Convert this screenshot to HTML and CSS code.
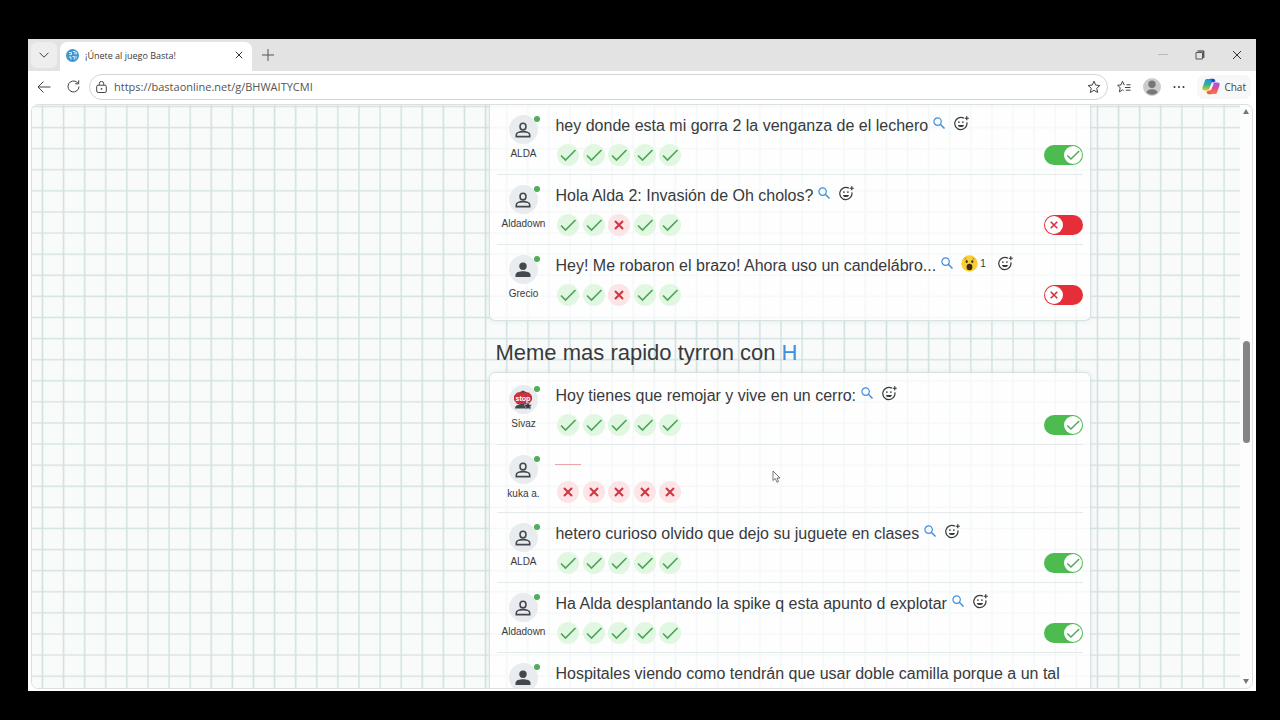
FILE: index.html
```html
<!DOCTYPE html>
<html lang="es">
<head>
<meta charset="UTF-8" />
<meta name="viewport" content="width=device-width, initial-scale=1" />
<title>¡Únete al juego Basta!</title>
<link rel="stylesheet" href="styles.css">
</head>
<body>

<!-- Iconos compartidos -->
<svg class="sprite" aria-hidden="true">
  <symbol id="i-check" viewBox="0 0 22 22"><path d="M4 11.500l4.500 4.500L18.500 6" fill="none" stroke="currentColor" stroke-width="1.700"/></symbol>
  <symbol id="i-cross" viewBox="0 0 22 22"><path d="M7 7l8 8M15 7l-8 8" fill="none" stroke="currentColor" stroke-width="2"/></symbol>
  <symbol id="i-user" viewBox="0 0 16 16"><path d="M8 1.200a2.900 2.900 0 0 1 2.900 2.900v.8a2.900 2.900 0 0 1-5.800 0v-.8A2.900 2.900 0 0 1 8 1.200zM1.300 14.600v-1.800c0-2 3.400-3.200 6.700-3.200s6.700 1.200 6.700 3.200v1.800z" fill="none" stroke="currentColor" stroke-width="1.600"/></symbol>
  <symbol id="i-user-full" viewBox="0 0 16 16"><circle cx="8" cy="4.300" r="3.700" fill="currentColor"/><path d="M.5 15v-2c0-2.800 4-3.700 7.500-3.700s7.500.9 7.500 3.700v2z" fill="currentColor"/></symbol>
  <symbol id="i-search" viewBox="0 0 12 12"><circle cx="4.600" cy="4.600" r="3.700" fill="none" stroke="currentColor" stroke-width="1.200"/><path d="M7.300 7.300l4.200 4.200" stroke="currentColor" stroke-width="1.500"/></symbol>
  <symbol id="i-smile" viewBox="0 0 16 16"><path d="M10.500 2.300A6.500 6.500 0 1 0 13.700 6.700" fill="none" stroke="currentColor" stroke-width="1.300"/><path d="M4.300 9.500h6.200a3.100 2.300 0 0 1-6.200 0z" fill="currentColor"/><circle cx="5.200" cy="6.500" r=".9" fill="currentColor"/><circle cx="9.500" cy="6.500" r=".9" fill="currentColor"/><path d="M13.600.2v4.400M11.400 2.400h4.400" stroke="currentColor" stroke-width="1.300"/></symbol>
  <symbol id="i-star" viewBox="0 0 14 14"><path d="M7 1.200l1.700 3.900 4.200.4-3.200 2.800 1 4.200L7 10.300l-3.700 2.200 1-4.200L1.100 5.500l4.200-.4z" fill="none" stroke="currentColor" stroke-linejoin="round"/></symbol>
</svg>

<div class="window">
  <header class="tabs">
    <button class="tab-menu" aria-label="Pestañas"><svg width="10" height="6" viewBox="0 0 10 6"><path d="M.5.7L5 5.200 9.500.7" fill="none" stroke="#444"/></svg></button>
    <div class="tab">
      <svg width="13" height="13" viewBox="0 0 13 13"><circle cx="6.500" cy="6.500" r="6.500" fill="#3b97d3"/><path d="M3 3.500h2.500v2H3.300M7 2.500h2v3M10.300 3v2.500M3 8h2v2.500M6.500 7.500h1.800v3M10 7v2.500" fill="none" stroke="#d9eefb"/></svg>
      <span class="tab-title">¡Únete al juego Basta!</span>
      <button class="icon-btn" aria-label="Cerrar pestaña"><svg width="8" height="8" viewBox="0 0 8 8"><path d="M.8.8l6.400 6.400M7.200.8L.8 7.200" stroke="#333"/></svg></button>
    </div>
    <button class="icon-btn new-tab" aria-label="Nueva pestaña"><svg width="12" height="12" viewBox="0 0 12 12"><path d="M6 0v12M0 6h12" stroke="#555"/></svg></button>
    <div class="window-controls">
      <button class="icon-btn" aria-label="Minimizar"><svg width="10" height="10" viewBox="0 0 10 10"><path d="M0 4.500h10" stroke="#bbb"/></svg></button>
      <button class="icon-btn" aria-label="Restaurar"><svg width="10" height="10" viewBox="0 0 10 10"><path d="M1 2.500h6.500V9H1z" fill="none" stroke="#555"/><path d="M2.500 1h6.300v7" fill="none" stroke="#222"/></svg></button>
      <button class="icon-btn" aria-label="Cerrar"><svg width="10" height="10" viewBox="0 0 10 10"><path d="M1 1l8 8M9 1L1 9" stroke="#333"/></svg></button>
    </div>
  </header>

  <nav class="toolbar">
    <div class="nav-buttons">
      <button class="icon-btn" aria-label="Atrás"><svg width="14" height="12" viewBox="0 0 14 12"><path d="M13.500 6H1M6.500.5L1 6l5.500 5.500" fill="none" stroke="#444"/></svg></button>
      <button class="icon-btn" aria-label="Actualizar"><svg width="13" height="13" viewBox="0 0 13 13"><path d="M12 6.500a5.500 5.500 0 1 1-1.800-4.100l1.300 1.300M11.700.3v3.500H8.200" fill="none" stroke="#444"/></svg></button>
    </div>
    <div class="omnibox">
      <svg width="11" height="12" viewBox="0 0 11 12"><path d="M2 4.200h7a1.300 1.300 0 0 1 1.300 1.300v4.500A1.500 1.500 0 0 1 8.800 11.500H2.200A1.500 1.500 0 0 1 .7 10V5.500A1.300 1.300 0 0 1 2 4.200zM3.300 4V2.600a2.200 2.200 0 0 1 4.400 0V4" fill="none" stroke="#444"/><circle cx="5.500" cy="7.800" r=".9" fill="#444"/></svg>
      <input type="text" class="url" aria-label="Dirección" value="https://bastaonline.net/g/BHWAITYCMI">
      <button class="icon-btn" aria-label="Favorito"><svg width="14" height="14"><use href="#i-star"/></svg></button>
    </div>
    <button class="icon-btn" aria-label="Favoritos"><svg width="14" height="14" viewBox="0 0 14 14"><path d="M7.500 4.800H7L5.500 1.300 4 4.900.7 5.300l2.500 2.600-.8 4 3.200-2 .9.5M9.500 4.800h4M8 7.500h5.500M8.800 10.200h4.700" fill="none" stroke="#444" stroke-linejoin="round"/></svg></button>
    <button class="icon-btn" aria-label="Perfil"><svg width="18" height="18" viewBox="0 0 18 18"><circle cx="9" cy="9" r="9" fill="#cbcbcb"/><circle cx="9" cy="6.300" r="3.700" fill="#777"/><path d="M3.500 14.500a5.500 3.300 0 0 1 11 0A8 8 0 0 1 3.500 14.500z" fill="#777"/></svg></button>
    <button class="icon-btn" aria-label="Más"><svg width="12" height="4" viewBox="0 0 12 4"><circle cx="1.500" cy="2" r="1" fill="#333"/><circle cx="6" cy="2" r="1" fill="#333"/><circle cx="10.500" cy="2" r="1" fill="#333"/></svg></button>
    <button class="chat-btn">
      <svg width="18" height="17" viewBox="0 0 18 17">
        <defs>
          <linearGradient id="g1" x1="0" y1="0" x2="0" y2="1"><stop offset="0" stop-color="#1f8fe8"/><stop offset=".5" stop-color="#31b394"/><stop offset="1" stop-color="#f5c518"/></linearGradient>
          <linearGradient id="g2" x1="0" y1="0" x2="0" y2="1"><stop offset="0" stop-color="#9a5be8"/><stop offset=".5" stop-color="#ea4a8c"/><stop offset="1" stop-color="#f5803c"/></linearGradient>
        </defs>
        <path d="M5 1h6L7.500 12.500H2.500C.5 12.500 0 11 .5 9.500L3 2.500C3.300 1.500 4 1 5 1z" fill="url(#g1)"/>
        <path d="M8 .8h3.500c1 0 1.500.8 2 2.700l-3 .8z" fill="#1c4fc4"/>
        <path d="M13 16H7l3.500-11.500h5c2 0 2.500 1.500 2 3L15 14.500c-.3 1-1 1.500-2 1.500z" fill="url(#g2)"/>
        <path d="M10 16.200H6.500c-1 0-1.500-.8-2-2.700l3-1z" fill="#f0643c"/>
        <path d="M9.600 5.200h2.200L9 12H6.900z" fill="#fff"/>
      </svg>
      Chat
    </button>
  </nav>

  <div class="view">
    <main class="page">
      <div class="content">

        <section class="card card-cut">
          <article class="row">
            <div class="player">
              <div class="avatar online"><svg width="16" height="16"><use href="#i-user"/></svg></div>
              <span class="name">ALDA</span>
            </div>
            <div class="answer">
              <div class="phrase">
                <span>hey donde esta mi gorra 2 la venganza de el lechero</span>
                <button class="icon-btn search" aria-label="Buscar"><svg width="12" height="12"><use href="#i-search"/></svg></button>
                <button class="icon-btn react" aria-label="Reaccionar"><svg width="15" height="15"><use href="#i-smile"/></svg></button>
              </div>
              <div class="votes">
                <svg class="yes"><use href="#i-check"/></svg><svg class="yes"><use href="#i-check"/></svg><svg class="yes"><use href="#i-check"/></svg><svg class="yes"><use href="#i-check"/></svg><svg class="yes"><use href="#i-check"/></svg>
              </div>
            </div>
            <label class="toggle"><input type="checkbox" aria-label="Validar respuesta de ALDA" checked><span class="knob"><svg class="on"><use href="#i-check"/></svg><svg class="off"><use href="#i-cross"/></svg></span></label>
          </article>

          <article class="row">
            <div class="player">
              <div class="avatar online"><svg width="16" height="16"><use href="#i-user"/></svg></div>
              <span class="name">Aldadown</span>
            </div>
            <div class="answer">
              <div class="phrase">
                <span>Hola Alda 2: Invasión de Oh cholos?</span>
                <button class="icon-btn search" aria-label="Buscar"><svg width="12" height="12"><use href="#i-search"/></svg></button>
                <button class="icon-btn react" aria-label="Reaccionar"><svg width="15" height="15"><use href="#i-smile"/></svg></button>
              </div>
              <div class="votes">
                <svg class="yes"><use href="#i-check"/></svg><svg class="yes"><use href="#i-check"/></svg><svg class="no"><use href="#i-cross"/></svg><svg class="yes"><use href="#i-check"/></svg><svg class="yes"><use href="#i-check"/></svg>
              </div>
            </div>
            <label class="toggle"><input type="checkbox" aria-label="Validar respuesta de Aldadown"><span class="knob"><svg class="on"><use href="#i-check"/></svg><svg class="off"><use href="#i-cross"/></svg></span></label>
          </article>

          <article class="row">
            <div class="player">
              <div class="avatar online"><svg width="16" height="16"><use href="#i-user-full"/></svg></div>
              <span class="name">Grecio</span>
            </div>
            <div class="answer">
              <div class="phrase">
                <span>Hey! Me robaron el brazo! Ahora uso un candelábro...</span>
                <button class="icon-btn search" aria-label="Buscar"><svg width="12" height="12"><use href="#i-search"/></svg></button>
                <button class="icon-btn emoji"><svg width="17" height="17" viewBox="0 0 17 17"><circle cx="8.500" cy="8.500" r="8.200" fill="#f8cf35"/><path d="M3.500 4.200l2-1M11.500 3.200l2 1" stroke="#b3821a"/><ellipse cx="5.700" cy="6.500" rx="1.100" ry="1.500" fill="#4a3515"/><ellipse cx="11.300" cy="6.500" rx="1.100" ry="1.500" fill="#4a3515"/><ellipse cx="8.500" cy="12" rx="2.900" ry="3.200" fill="#3d2c14"/></svg><span class="count">1</span></button>
                <button class="icon-btn react" aria-label="Reaccionar"><svg width="15" height="15"><use href="#i-smile"/></svg></button>
              </div>
              <div class="votes">
                <svg class="yes"><use href="#i-check"/></svg><svg class="yes"><use href="#i-check"/></svg><svg class="no"><use href="#i-cross"/></svg><svg class="yes"><use href="#i-check"/></svg><svg class="yes"><use href="#i-check"/></svg>
              </div>
            </div>
            <label class="toggle"><input type="checkbox" aria-label="Validar respuesta de Grecio"><span class="knob"><svg class="on"><use href="#i-check"/></svg><svg class="off"><use href="#i-cross"/></svg></span></label>
          </article>
        </section>

        <h2>Meme mas rapido tyrron con <span class="letter">H</span></h2>

        <section class="card">
          <article class="row">
            <div class="player">
              <div class="avatar online">
                <svg width="20" height="20" viewBox="0 0 20 20"><path d="M2 18.500c0-3 3-4.500 8-4.500s8 1.500 8 4.500z" fill="#44474e"/><path d="M5 3l5-2.500L15 3z" fill="#44474e"/><path d="M4 2.500h12L19 6v4l-3 4H4l-3-4V6z" fill="#d32f3a"/><text x="10" y="10.500" class="stop-text">stop</text><path d="M15 12l1.200 2.500 2.800.3-2 2 .5 2.700-2.500-1.300-2.500 1.300.5-2.700-2-2 2.800-.3z" fill="#33363d" stroke="#e9ecef" stroke-width=".5"/></svg>
              </div>
              <span class="name">Sivaz</span>
            </div>
            <div class="answer">
              <div class="phrase">
                <span>Hoy tienes que remojar y vive en un cerro:</span>
                <button class="icon-btn search" aria-label="Buscar"><svg width="12" height="12"><use href="#i-search"/></svg></button>
                <button class="icon-btn react" aria-label="Reaccionar"><svg width="15" height="15"><use href="#i-smile"/></svg></button>
              </div>
              <div class="votes">
                <svg class="yes"><use href="#i-check"/></svg><svg class="yes"><use href="#i-check"/></svg><svg class="yes"><use href="#i-check"/></svg><svg class="yes"><use href="#i-check"/></svg><svg class="yes"><use href="#i-check"/></svg>
              </div>
            </div>
            <label class="toggle"><input type="checkbox" aria-label="Validar respuesta de Sivaz" checked><span class="knob"><svg class="on"><use href="#i-check"/></svg><svg class="off"><use href="#i-cross"/></svg></span></label>
          </article>

          <article class="row row-empty">
            <div class="player">
              <div class="avatar online"><svg width="16" height="16"><use href="#i-user"/></svg></div>
              <span class="name">kuka a.</span>
            </div>
            <div class="answer">
              <div class="phrase"><span class="blank"></span></div>
              <div class="votes">
                <svg class="no"><use href="#i-cross"/></svg><svg class="no"><use href="#i-cross"/></svg><svg class="no"><use href="#i-cross"/></svg><svg class="no"><use href="#i-cross"/></svg><svg class="no"><use href="#i-cross"/></svg>
              </div>
            </div>
          </article>

          <article class="row">
            <div class="player">
              <div class="avatar online"><svg width="16" height="16"><use href="#i-user"/></svg></div>
              <span class="name">ALDA</span>
            </div>
            <div class="answer">
              <div class="phrase">
                <span>hetero curioso olvido que dejo su juguete en clases</span>
                <button class="icon-btn search" aria-label="Buscar"><svg width="12" height="12"><use href="#i-search"/></svg></button>
                <button class="icon-btn react" aria-label="Reaccionar"><svg width="15" height="15"><use href="#i-smile"/></svg></button>
              </div>
              <div class="votes">
                <svg class="yes"><use href="#i-check"/></svg><svg class="yes"><use href="#i-check"/></svg><svg class="yes"><use href="#i-check"/></svg><svg class="yes"><use href="#i-check"/></svg><svg class="yes"><use href="#i-check"/></svg>
              </div>
            </div>
            <label class="toggle"><input type="checkbox" aria-label="Validar respuesta de ALDA" checked><span class="knob"><svg class="on"><use href="#i-check"/></svg><svg class="off"><use href="#i-cross"/></svg></span></label>
          </article>

          <article class="row">
            <div class="player">
              <div class="avatar online"><svg width="16" height="16"><use href="#i-user"/></svg></div>
              <span class="name">Aldadown</span>
            </div>
            <div class="answer">
              <div class="phrase">
                <span>Ha Alda desplantando la spike q esta apunto d explotar</span>
                <button class="icon-btn search" aria-label="Buscar"><svg width="12" height="12"><use href="#i-search"/></svg></button>
                <button class="icon-btn react" aria-label="Reaccionar"><svg width="15" height="15"><use href="#i-smile"/></svg></button>
              </div>
              <div class="votes">
                <svg class="yes"><use href="#i-check"/></svg><svg class="yes"><use href="#i-check"/></svg><svg class="yes"><use href="#i-check"/></svg><svg class="yes"><use href="#i-check"/></svg><svg class="yes"><use href="#i-check"/></svg>
              </div>
            </div>
            <label class="toggle"><input type="checkbox" aria-label="Validar respuesta de Aldadown" checked><span class="knob"><svg class="on"><use href="#i-check"/></svg><svg class="off"><use href="#i-cross"/></svg></span></label>
          </article>

          <article class="row">
            <div class="player">
              <div class="avatar online"><svg width="16" height="16"><use href="#i-user-full"/></svg></div>
            </div>
            <div class="answer">
              <div class="phrase"><span>Hospitales viendo como tendrán que usar doble camilla porque a un tal</span></div>
            </div>
          </article>
        </section>

      </div>
    </main>
    <div class="scrollbar">
      <svg width="6" height="5" viewBox="0 0 6 5"><path d="M0 5l3-5 3 5z" fill="#777"/></svg>
      <div class="track"><div class="thumb"></div></div>
      <svg width="6" height="5" viewBox="0 0 6 5"><path d="M0 0h6L3 5z" fill="#777"/></svg>
    </div>
    <svg class="cursor" width="9" height="13" viewBox="0 0 9 13"><path d="M1 1v9.500l2.300-2 1.700 3.800 1.500-.7L5 8h3z" fill="#fff" stroke="#555" stroke-width=".8"/></svg>
  </div>
</div>

</body>
</html>
```
FILE: styles.css
```css
* {
  box-sizing: border-box;
}
body {
  margin: 0;
  height: 100vh;
  padding: 39px 24px 29px 28px;
  background: #000;
  font-family: "Liberation Sans", Arial, sans-serif;
  color: #383a3d;
  overflow: hidden;
}
button {
  border: none;
  background: none;
  padding: 0;
  font: inherit;
  color: inherit;
  cursor: pointer;
}
svg {
  display: block;
  flex: none;
}
.sprite {
  position: absolute;
  width: 0;
  height: 0;
}
.icon-btn {
  display: flex;
  align-items: center;
  justify-content: center;
  flex: none;
}

/* Ventana del navegador */
.window {
  display: flex;
  flex-direction: column;
  height: 100%;
  background: #fff;
}
.tabs {
  display: flex;
  align-items: center;
  height: 32px;
  padding-left: 3px;
  background: #e3e3e3;
  font-family: "Open Sans", "Noto Sans", sans-serif;
}
.tab-menu {
  display: flex;
  align-items: center;
  justify-content: center;
  width: 26px;
  height: 26px;
  border-radius: 6px;
  background: #eeeeee;
}
.tab {
  display: flex;
  align-items: center;
  align-self: flex-end;
  gap: 6px;
  width: 192px;
  height: 29px;
  margin-left: 3px;
  padding: 0 9px 3px 6px;
  border-radius: 7px 7px 0 0;
  background: #fff;
}
.tab-title {
  flex: 1;
  font-size: 9px;
  white-space: nowrap;
}
.new-tab {
  margin-left: 10px;
}
.window-controls {
  display: flex;
  gap: 27px;
  margin-left: auto;
  padding-right: 14px;
}
.toolbar {
  display: flex;
  align-items: center;
  gap: 12px;
  height: 33px;
  padding: 0 5px 2px 9px;
  font-family: "Open Sans", "Noto Sans", sans-serif;
  color: #444;
}
.nav-buttons {
  display: flex;
  align-items: center;
  gap: 16px;
}
.omnibox {
  display: flex;
  align-items: center;
  flex: 1;
  gap: 7px;
  height: 26px;
  margin: 0 -3px;
  padding: 0 6px;
  border: 1px solid #d4d4d4;
  border-radius: 13px;
}
.url {
  flex: 1;
  min-width: 0;
  padding: 0;
  border: none;
  outline: none;
  background: none;
  font: 11px "Open Sans", "Noto Sans", sans-serif;
  color: #555;
}
.chat-btn {
  display: flex;
  align-items: center;
  gap: 4px;
  height: 24px;
  padding: 0 5px;
  border-radius: 7px;
  background: #f7f7f7;
  font-size: 10px;
}

/* Hoja cuadriculada */
.view {
  position: relative;
  display: flex;
  flex: 1;
  min-height: 0;
  margin: 0 3px 2px;
  border: 1px solid #dcdfdf;
  border-radius: 7px;
  background: #fdfdfd;
  overflow: hidden;
}
.page {
  display: grid;
  grid-template-columns: 77fr 602px 25fr;
  flex: 1;
  background-color: #f9fafa;
  background-image:
    repeating-linear-gradient(90deg, transparent 0, #cfe2e0 0.7%, transparent 1.4%, transparent 10%),
    repeating-linear-gradient(180deg, transparent 0, #d6e4e2 0.7%, transparent 1.4%, transparent 10%);
  background-size: 211px 211px;
  background-position: 9px 0;
}
.content {
  grid-column: 2;
  min-width: 0;
}
.card {
  padding: 2px 7px 5px;
  border: 1px solid #d9e2e3;
  border-radius: 6px;
  background: rgba(255, 255, 255, 0.75);
  box-shadow: 0 0 4px rgba(170, 190, 195, 0.3);
}
.card-cut {
  padding-top: 0;
  border-top: none;
  border-radius: 0 0 6px 6px;
}
h2 {
  margin: 18px 0 5px 6px;
  font-size: 22px;
  line-height: 28px;
  font-weight: normal;
}
.letter {
  color: #3f8fdc;
}
.row {
  display: flex;
  height: 70px;
  border-bottom: 1px solid #e4e9ea;
}
.row:last-child {
  border-bottom: none;
}
.row-empty {
  height: 68px;
}
.player {
  display: flex;
  flex-direction: column;
  align-items: center;
  width: 52px;
  padding-top: 10px;
}
.avatar {
  position: relative;
  display: flex;
  align-items: center;
  justify-content: center;
  width: 29px;
  height: 29px;
  border-radius: 50%;
  background: #e9ecef;
  color: #44474e;
}
.online::after {
  content: "";
  position: absolute;
  top: 1px;
  right: -2px;
  width: 6px;
  height: 6px;
  border-radius: 50%;
  background: #4fae57;
}
.stop-text {
  font: bold 7px "Liberation Sans", sans-serif;
  fill: #fff;
  text-anchor: middle;
}
.name {
  margin-top: 4px;
  font-size: 10px;
  line-height: 12px;
  white-space: nowrap;
}
.answer {
  flex: 1;
  min-width: 0;
  padding: 9px 0 0 6px;
}
.phrase {
  display: flex;
  align-items: center;
  height: 24px;
  font-size: 16px;
  line-height: 24px;
  white-space: nowrap;
}
.search,
.react,
.emoji {
  padding-bottom: 6px;
}
.search {
  margin-left: 5px;
  color: #3f8fdc;
}
.react {
  margin-left: 9px;
}
.emoji {
  gap: 2px;
  margin-left: 8px;
  font-size: 10px;
}
.count {
  padding: 2px 3px 0 0;
  line-height: 12px;
}
.blank {
  width: 26px;
  border-top: 1px solid #eba5a9;
}
.votes {
  display: flex;
  justify-content: space-between;
  width: 126px;
  margin-top: 6px;
  padding-left: 2px;
}
.row-empty .phrase {
  height: 21px;
}
.votes svg {
  width: 22px;
  height: 22px;
  border-radius: 50%;
}
.yes {
  background: #e2f7e2;
  color: #4da659;
}
.no {
  background: #fde4e7;
  color: #d0343f;
}

/* Interruptor de voto */
.toggle {
  align-self: flex-start;
  margin-top: 40px;
  cursor: pointer;
}
.toggle input {
  position: absolute;
  opacity: 0;
  margin: 0;
}
.knob {
  display: flex;
  width: 39px;
  height: 20px;
  padding: 1px;
  border-radius: 10px;
  background: #e62e38;
}
.knob svg {
  width: 18px;
  height: 18px;
  border-radius: 50%;
  background: #fff;
}
.knob .on {
  display: none;
  color: #4da659;
}
.knob .off {
  color: #d0343f;
}
.toggle input:checked + .knob {
  justify-content: flex-end;
  background: #4cbb50;
}
.toggle input:checked + .knob .on {
  display: block;
}
.toggle input:checked + .knob .off {
  display: none;
}

.scrollbar {
  display: flex;
  flex-direction: column;
  align-items: center;
  width: 12px;
  padding: 4px 0;
}
.track {
  flex: 1;
  padding-top: 227px;
}
.thumb {
  width: 7px;
  height: 102px;
  border-radius: 4px;
  background: #858585;
}
.cursor {
  position: absolute;
  left: 740px;
  top: 365px;
}
```
